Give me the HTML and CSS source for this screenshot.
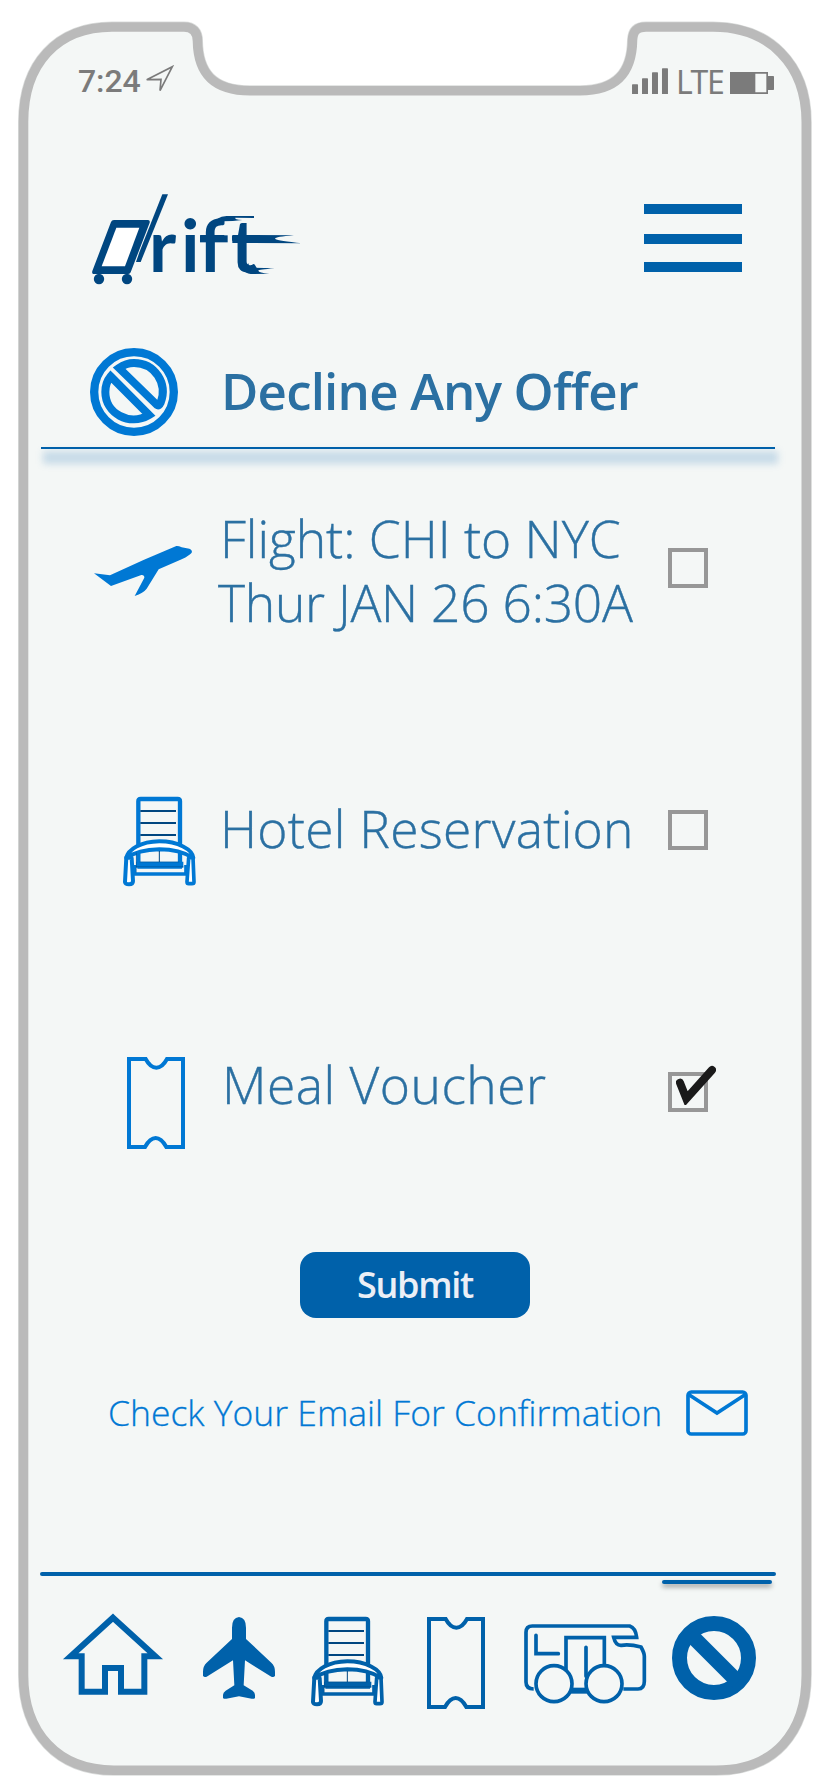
FILE: index.html
```html
<!DOCTYPE html>
<html lang="en">
<head>
<meta charset="utf-8">
<title>Drift - Decline Any Offer</title>
<link rel="stylesheet" href="styles.css">
</head>
<body>
<svg class="defs" width="0" height="0" aria-hidden="true">
  <symbol id="chair" viewBox="66 78 228 276">
    <g fill="none" stroke="currentColor">
      <path d="M115 225V94q0-7 7-7h111q7 0 7 7v190" stroke-width="13"/>
      <path d="M115 250V285" stroke-width="13"/>
      <path d="M108 284H250" stroke-width="18"/>
      <path d="M103 285V312H258V285M112 291H246" stroke-width="11"/>
      <path d="M79 264C84 238 122 215 178 214C234 214 278 238 280 264C256 249 222 238 178 238C135 239 102 248 79 264Z" fill="#fff" stroke-width="12" stroke-linejoin="round"/>
      <path d="M79 262L75 336Q76 343 87 343Q99 343 99 333L95 264Z" fill="#fff" stroke-width="12" stroke-linejoin="round"/>
      <path d="M279 262L282 336Q282 341 276 341H266Q261 341 261 335L266 264Z" fill="#fff" stroke-width="11" stroke-linejoin="round"/>
    </g>
    <g stroke="#004680" fill="none">
      <path d="M121 123H228M121 159H228M121 195H228" stroke-width="6"/>
      <path d="M178 243V276" stroke-width="3"/>
      <path d="M109 248V308M108 290H250M119 276H238" stroke-width="2" opacity=".65"/>
    </g>
  </symbol>
  <symbol id="ticket" viewBox="81 861 174 276">
    <path d="M87 867H137Q151 893 169 893Q187 893 201 867H249V1131H199Q184 1104 167 1104Q150 1104 135 1131H87Z" fill="none" stroke="currentColor" stroke-width="12"/>
  </symbol>
</svg>

<div class="phone">
  <svg class="frame" viewBox="0 0 828 1792" aria-hidden="true">
    <path class="shell-edge" d="M23.5 122C23.5 64 57 27 112 27H184C193 27 197.500 32 197.500 41C198 72 212 90.700 250 90.700H580C617 90.700 632 72 632.500 40C633 31 637 27 646 27H713C769 27 806.300 64 806.300 122V1675C806.300 1733 774 1770.300 716 1770.300H114C58 1770.300 23.500 1733 23.500 1675Z"/>
    <path class="shell" d="M23.5 122C23.5 64 57 27 112 27H184C193 27 197.500 32 197.500 41C198 72 212 90.700 250 90.700H580C617 90.700 632 72 632.500 40C633 31 637 27 646 27H713C769 27 806.300 64 806.300 122V1675C806.300 1733 774 1770.300 716 1770.300H114C58 1770.300 23.500 1733 23.500 1675Z"/>
  </svg>

  <div class="status">
    <span class="time">7:24</span>
    <svg class="location" viewBox="432 195 92 85"><path d="M440 239L517 200L480 272L483 238Z" fill="none" stroke="#7b7b7b" stroke-width="5"/></svg>
    <svg class="signal" viewBox="672 203 108 79" fill="#7b7b7b"><rect x="672" y="252" width="18" height="30" rx="2"/><rect x="702" y="234" width="18" height="48" rx="2"/><rect x="732" y="216" width="18" height="66" rx="2"/><rect x="762" y="204" width="18" height="78" rx="2"/></svg>
    <span class="network">LTE</span>
    <svg class="battery" viewBox="966 216 132 66"><path d="M966 216H1080V282H966ZM1042 221V277H1075V221Z" fill="#7b7b7b" fill-rule="evenodd"/><rect x="1079" y="228" width="19" height="42" rx="2" fill="#7b7b7b"/></svg>
  </div>

  <header class="header">
    <svg class="logo" viewBox="270 576 645 282" role="img" aria-label="Drift">
      <g fill="#004680">
        <path d="M342 660H444Q451 661 449 668L392 817Q390 822 385 822H279Q275 819 277 813L333 666Q335 660 342 660Z"/>
        <path d="M487 583H504L422 786H408L418 757Z"/>
        <circle cx="297" cy="837" r="15.500"/><circle cx="381" cy="837" r="15.500"/>
        <path d="M349 683H418L375 799H305Z" fill="#fff"/>
        <text class="wordmark" y="816" x="447 543 596 692">rift</text>
        <path d="M600 706H683V727H600Z"/>
        <path d="M652 656Q664 648 680 648H762V654L706 653Q702 658 727 660Q700 664 667 664Z"/>
        <path d="M697 705L882 706Q820 711 826 717Q835 722 906 730L697 729Z"/>
        <path d="M745 790Q747 803 762 803L824 805Q775 809 775 812Q776 818 808 821L752 822Q736 820 728 808Z"/>
      </g>
    </svg>
    <div class="menu"><i></i><i></i><i></i></div>
  </header>

  <section class="title">
    <svg class="decline-icon" viewBox="180 54 264 264" fill="none" stroke="#0078d4">
      <circle cx="312" cy="186" r="119.500" stroke-width="25"/>
      <path d="M242 139L357 255C298 290 226 250 226 186Q226 158 242 139Z" stroke-width="24"/>
      <path d="M267 114Q288 99 312 99C374 99 414 160 392 218Q387 229 381 225Z" stroke-width="24"/>
    </svg>
    <h1>Decline Any Offer</h1>
  </section>
  <div class="rule"></div>

  <main class="offers">
    <div class="offer flight">
      <svg class="offer-icon" viewBox="192 645 296 155"><path d="M192 730L240 736L342 689L439 648Q445 647 455 652L478 656Q488 660 485 668Q480 675 455 688L386 718L350 776Q340 789 314 798L343 743Q343 734 334 735L243 768Z" fill="#0078d4"/></svg>
      <p><span class="route">Flight: CHI to NYC</span><span class="when">Thur JAN 26 6:30A</span></p>
      <span class="box"></span>
    </div>
    <div class="offer hotel">
      <svg class="offer-icon"><use href="#chair"/></svg>
      <p>Hotel Reservation</p>
      <span class="box"></span>
    </div>
    <div class="offer meal">
      <svg class="offer-icon"><use href="#ticket"/></svg>
      <p>Meal Voucher</p>
      <span class="box"><svg class="check" viewBox="528 855 120 120"><path d="M540 908L559 956L636 870" fill="none" stroke="#1a1a1a" stroke-width="24" stroke-linecap="round" stroke-miterlimit="8"/></svg></span>
    </div>
  </main>

  <button class="submit">Submit</button>

  <div class="confirm">
    <span>Check Your Email For Confirmation</span>
    <svg class="mail" viewBox="738 480 186 138" fill="none" stroke="#0078d4" stroke-width="11"><rect x="744" y="486" width="174" height="126" rx="10"/><path d="M747 494L831 549L915 494"/></svg>
  </div>

  <nav class="nav">
    <div class="nav-line"></div>
    <div class="nav-active"></div>
    <div class="nav-items">
      <svg class="home" viewBox="186 160 306 248"><path d="M339 174L466 290H433V396H363V325H315V396H245V290H212Z" fill="none" stroke="currentColor" stroke-width="18" stroke-miterlimit="3"/></svg>
      <svg class="plane" viewBox="606 168 222 252"><path d="M717 171Q738 173 738 203V237L814 308Q825 318 825 335V347Q822 353 814 350L735 301L731 376L758 392Q765 397 765 405V413Q763 418 755 416L717 409L679 416Q671 418 669 413V405Q669 397 677 392L703 376L699 301L620 350Q612 353 609 347V335Q609 318 620 308L696 237V203Q696 173 717 171Z" fill="currentColor"/></svg>
      <svg class="chair"><use href="#chair"/></svg>
      <svg class="ticket"><use href="#ticket"/></svg>
      <svg class="camper" viewBox="69 190 372 246" fill="none" stroke="currentColor" stroke-width="11">
        <path d="M101 388Q78 388 78 367V218Q78 199 97 199H389Q407 205 410 233H341Q347 258 364 257Q389 253 423 262Q433 280 433 290V365Q433 388 414 388H370"/>
        <path d="M108 227V282H175" stroke-linecap="round"/>
        <path d="M198 330V234H313V315M258 263V350" stroke-linecap="round" stroke-linejoin="miter"/>
        <path d="M211 393H266" stroke-width="18"/>
        <circle cx="162" cy="372" r="54" fill="#f4f7f6"/><circle cx="312" cy="372" r="54" fill="#f4f7f6"/>
      </svg>
      <svg class="ban" viewBox="516 168 252 252"><circle cx="642" cy="294" r="103.500" fill="none" stroke="currentColor" stroke-width="45"/><path d="M570 222L714 366" stroke="currentColor" stroke-width="45"/></svg>
    </div>
  </nav>
</div>
</body>
</html>
```
FILE: styles.css
```css
* { box-sizing: border-box; }
body { margin: 0; background: #fff; font-family: "Open Sans", "Noto Sans", sans-serif; }
svg { display: block; flex: none; }
.defs { position: absolute; }
.phone { position: relative; width: 828px; height: 1792px; overflow: hidden; display: flex; flex-direction: column; }
.frame { position: absolute; inset: 0; width: 828px; height: 1792px; z-index: -1; }
.shell-edge { fill: #f4f7f6; stroke: #dcdedd; stroke-width: 11; }
.shell { fill: #f4f7f6; stroke: #bababa; stroke-width: 9.600; }

.status { height: 40px; margin-top: 60px; padding-left: 78px; display: flex; color: #7b7b7b; }
.time { width: 66px; padding-top: 1px; font: 500 32px/40px Roboto, sans-serif; letter-spacing: -.1px; }
.location { width: 30.700px; height: 28.300px; margin-top: 5px; }
.signal { width: 36px; height: 26.300px; margin: 7.700px 0 0 457.300px; }
.network { width: 46px; margin: 0 8px; padding-top: 2px; font: 400 32px/40px "Noto Sans", sans-serif; letter-spacing: -1.5px; }
.battery { width: 44px; height: 22px; margin-top: 12px; }

.header { height: 94px; margin-top: 92px; padding: 0 86px 0 90px; display: flex; justify-content: space-between; }
.logo { width: 215px; height: 94px; overflow: visible; }
.wordmark { font: 700 219px Lato, sans-serif; }
.menu { width: 98px; margin-top: 12px; }
.menu i { display: block; height: 10px; margin-bottom: 20px; background: #0061aa; }
.menu i + i { margin-bottom: 18px; }

.title { height: 99px; margin-top: 62px; padding-left: 90px; display: flex; }
.decline-icon { width: 88px; height: 88px; }
h1 { margin: 10px 0 0 43px; font-size: 51px; font-weight: 600; line-height: 64px; color: #2b70a2; white-space: nowrap; letter-spacing: -.8px; }
.rule { position: relative; width: 734px; height: 2px; flex: none; margin-left: 41px; background: #0061aa; }
.rule::after { content: ""; position: absolute; left: 2px; right: -3px; top: 4px; height: 13px; background: rgba(0, 97, 170, .18); filter: blur(3.5px); }

.offers { margin-top: 57px; height: 744px; }
.offer { display: flex; align-items: flex-start; color: #2b70a2; }
.offer p { margin: 0; font-size: 51.500px; font-weight: 300; line-height: 64px; white-space: nowrap; width: 450px; -webkit-text-stroke: .4px currentColor; }
.offer p span { display: block; }
.route { padding-left: 2px; letter-spacing: -.05px; }
.when { letter-spacing: -.25px; }
.box { position: relative; width: 40px; height: 40px; border: 4px solid #979797; }
.check { position: absolute; left: 4px; top: -11px; width: 40px; height: 40px; }
.flight { height: 290px; padding-left: 94px; }
.flight .offer-icon { width: 98.700px; height: 51.700px; margin: 39px 25.300px 0 0; }
.flight .box { margin-top: 42px; }
.hotel { height: 256px; padding-left: 122px; }
.hotel .offer-icon { width: 76px; height: 92px; margin-right: 20px; color: #0078d4; }
.hotel p { padding-left: 2px; letter-spacing: .25px; }
.hotel .box { margin-top: 14px; }
.meal { padding-left: 127px; }
.meal .offer-icon { width: 58px; height: 92px; margin: 5px 33px 0 0; color: #0078d4; }
.meal p { padding-left: 4px; letter-spacing: .5px; }
.meal .box { margin-top: 20px; }

.submit { width: 230px; height: 66px; flex: none; margin: 2px 0 0 300px; padding: 0; border: 0; border-radius: 16px; background: #0061aa; color: #ebeff6; font: 600 36px/66px "Open Sans", sans-serif; letter-spacing: -1.3px; }
.confirm { height: 48px; margin-top: 71px; padding-left: 108px; display: flex; color: #0078d4; }
.confirm span { width: 578px; font-size: 35.500px; font-weight: 300; line-height: 46px; white-space: nowrap; -webkit-text-stroke: .3px currentColor; }
.mail { width: 62px; height: 46px; margin-top: 1px; }

.nav { margin-top: 135px; color: #0061aa; }
.nav-line { width: 736px; height: 4px; margin-left: 40px; border-radius: 2px; background: #0061aa; }
.nav-active { width: 110px; height: 4px; margin: 4px 0 0 662px; border-radius: 2px; background: #0061aa; box-shadow: 0 3px 5px rgba(0, 0, 0, .38); }
.nav-items { display: flex; align-items: flex-start; padding: 29.300px 0 0 62px; }
.home { width: 102px; height: 82.700px; }
.plane { width: 74px; height: 84px; margin: 2.700px 0 0 38px; }
.chair { width: 76px; height: 92px; margin: 2.700px 0 0 34px; }
.ticket { width: 58px; height: 92px; margin: 3.700px 0 0 41px; }
.camper { width: 124px; height: 82px; margin: 10px 0 0 38px; }
.ban { width: 84px; height: 84px; margin: 2.700px 0 0 25px; }
```
